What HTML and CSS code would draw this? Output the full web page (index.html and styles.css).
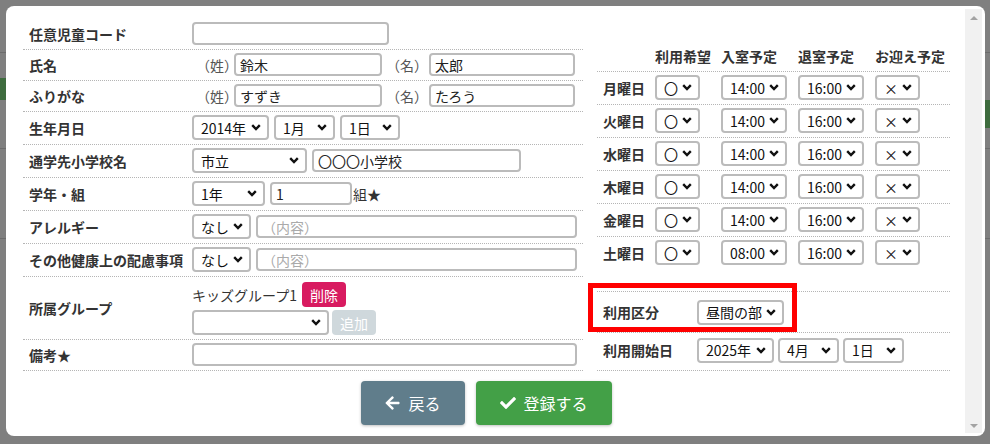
FILE: index.html
```html
<!DOCTYPE html>
<html lang="ja">
<head>
  <meta charset="UTF-8">
  <title>児童登録</title>
  <link rel="stylesheet" href="styles.css">
</head>
<body>
  <div class="backdrop">
    <div class="modal">
      <div class="modal-body">
        <div class="form-cols">

          <!-- 基本情報 -->
          <div class="form-left">
            <div class="frow">
              <div class="flabel">任意児童コード</div>
              <div class="fvalue"><input class="inp w-code" type="text"></div>
            </div>
            <div class="frow">
              <div class="flabel">氏名</div>
              <div class="fvalue name-value">
                <span class="paren">（姓）</span><input class="inp w-sei" type="text" value="鈴木">
                <span class="paren paren-mei">（名）</span><input class="inp w-mei" type="text" value="太郎">
              </div>
            </div>
            <div class="frow">
              <div class="flabel">ふりがな</div>
              <div class="fvalue name-value">
                <span class="paren">（姓）</span><input class="inp w-sei" type="text" value="すずき">
                <span class="paren paren-mei">（名）</span><input class="inp w-mei" type="text" value="たろう">
              </div>
            </div>
            <div class="frow">
              <div class="flabel">生年月日</div>
              <div class="fvalue">
                <select class="sel w-year"><option>2014年</option></select>
                <select class="sel w-month"><option>1月</option></select>
                <select class="sel w-day"><option>1日</option></select>
              </div>
            </div>
            <div class="frow">
              <div class="flabel">通学先小学校名</div>
              <div class="fvalue">
                <select class="sel w-city"><option>市立</option></select>
                <input class="inp w-school" type="text" value="〇〇〇小学校">
              </div>
            </div>
            <div class="frow">
              <div class="flabel">学年・組</div>
              <div class="fvalue">
                <select class="sel w-grade"><option>1年</option></select>
                <input class="inp w-class" type="text" value="1"><span class="suffix">組★</span>
              </div>
            </div>
            <div class="frow">
              <div class="flabel">アレルギー</div>
              <div class="fvalue">
                <select class="sel w-yn"><option>なし</option></select>
                <input class="inp w-note" type="text" placeholder="（内容）">
              </div>
            </div>
            <div class="frow">
              <div class="flabel">その他健康上の配慮事項</div>
              <div class="fvalue">
                <select class="sel w-yn"><option>なし</option></select>
                <input class="inp w-note" type="text" placeholder="（内容）">
              </div>
            </div>
            <div class="frow">
              <div class="flabel">所属グループ</div>
              <div class="fvalue group-value">
                <div class="group-line">
                  <span>キッズグループ1</span>
                  <button class="btn-sm btn-delete">削除</button>
                </div>
                <div class="group-line">
                  <select class="sel w-group"><option></option></select>
                  <button class="btn-sm btn-add">追加</button>
                </div>
              </div>
            </div>
            <div class="frow">
              <div class="flabel">備考★</div>
              <div class="fvalue"><input class="inp w-memo" type="text"></div>
            </div>
          </div>

          <!-- 利用予定 -->
          <div class="form-right">
            <div class="week">
              <div class="wrow whead">
                <div></div>
                <div>利用希望</div>
                <div>入室予定</div>
                <div>退室予定</div>
                <div>お迎え予定</div>
              </div>
              <div class="wrow">
                <div class="wday">月曜日</div>
                <div><select class="sel w-mark"><option>〇</option></select></div>
                <div><select class="sel w-time"><option>14:00</option></select></div>
                <div><select class="sel w-time"><option>16:00</option></select></div>
                <div><select class="sel w-mark"><option>×</option></select></div>
              </div>
              <div class="wrow">
                <div class="wday">火曜日</div>
                <div><select class="sel w-mark"><option>〇</option></select></div>
                <div><select class="sel w-time"><option>14:00</option></select></div>
                <div><select class="sel w-time"><option>16:00</option></select></div>
                <div><select class="sel w-mark"><option>×</option></select></div>
              </div>
              <div class="wrow">
                <div class="wday">水曜日</div>
                <div><select class="sel w-mark"><option>〇</option></select></div>
                <div><select class="sel w-time"><option>14:00</option></select></div>
                <div><select class="sel w-time"><option>16:00</option></select></div>
                <div><select class="sel w-mark"><option>×</option></select></div>
              </div>
              <div class="wrow">
                <div class="wday">木曜日</div>
                <div><select class="sel w-mark"><option>〇</option></select></div>
                <div><select class="sel w-time"><option>14:00</option></select></div>
                <div><select class="sel w-time"><option>16:00</option></select></div>
                <div><select class="sel w-mark"><option>×</option></select></div>
              </div>
              <div class="wrow">
                <div class="wday">金曜日</div>
                <div><select class="sel w-mark"><option>〇</option></select></div>
                <div><select class="sel w-time"><option>14:00</option></select></div>
                <div><select class="sel w-time"><option>16:00</option></select></div>
                <div><select class="sel w-mark"><option>×</option></select></div>
              </div>
              <div class="wrow">
                <div class="wday">土曜日</div>
                <div><select class="sel w-mark"><option>〇</option></select></div>
                <div><select class="sel w-time"><option>08:00</option></select></div>
                <div><select class="sel w-time"><option>16:00</option></select></div>
                <div><select class="sel w-mark"><option>×</option></select></div>
              </div>
            </div>

            <div class="usage">
              <div class="urow urow-kind">
                <div class="ulabel">利用区分</div>
                <div class="uvalue"><select class="sel w-kind"><option>昼間の部</option></select></div>
              </div>
              <div class="urow urow-start">
                <div class="ulabel">利用開始日</div>
                <div class="uvalue">
                  <select class="sel w-year"><option>2025年</option></select>
                  <select class="sel w-month"><option>4月</option></select>
                  <select class="sel w-day2"><option>1日</option></select>
                </div>
              </div>
              <div class="highlight"></div>
            </div>
          </div>
        </div>

        <div class="actions">
          <button class="btn btn-back">
            <svg class="ico-back" viewBox="0 0 448 512"><path fill="#fff" d="M257.5 445.1l-22.2 22.2c-9.4 9.4-24.6 9.4-33.9 0L7 273c-9.4-9.4-9.4-24.6 0-33.9L201.4 44.7c9.4-9.4 24.6-9.4 33.9 0l22.2 22.2c9.5 9.5 9.3 25-.4 34.3L136.6 216H424c13.3 0 24 10.7 24 24v32c0 13.3-10.7 24-24 24H136.6l120.5 114.8c9.8 9.3 10 24.8.4 34.3z"/></svg>
            戻る
          </button>
          <button class="btn btn-save">
            <svg class="ico-check" viewBox="0 0 512 512"><path fill="#fff" d="M173.9 439.4l-166.4-166.4c-10-10-10-26.2 0-36.2l36.2-36.2c10-10 26.2-10 36.2 0L192 312.7 432.1 72.6c10-10 26.2-10 36.2 0l36.2 36.2c10 10 10 26.2 0 36.2l-294.4 294.4c-10 10-26.2 10-36.2 0z"/></svg>
            登録する
          </button>
        </div>
      </div>

      <div class="scrollbar">
        <span class="sb-up"></span>
        <span class="sb-down"></span>
      </div>
    </div>
  </div>
</body>
</html>
```

FILE: styles.css
```css
/* General */
* {
  margin: 0;
  padding: 0;
  box-sizing: border-box;
}

body {
  width: 990px;
  height: 444px;
  overflow: hidden;
  font-family: "Noto Sans CJK JP", "Noto Sans", sans-serif;
  font-size: 14px;
  color: #333;
  background:
    linear-gradient(#3e6c3e, #3e6c3e) 0 78px / 6px 22px no-repeat,
    linear-gradient(#3e6c3e, #3e6c3e) 984px 100px / 6px 28px no-repeat,
    linear-gradient(#6c6c6c, #6c6c6c) 0 52px / 100% 1px no-repeat,
    linear-gradient(#6c6c6c, #6c6c6c) 0 148px / 100% 1px no-repeat,
    linear-gradient(#6c6c6c, #6c6c6c) 0 238px / 100% 1px no-repeat,
    #7f7f7f;
}

/* Modal */
.backdrop {
  padding: 6px;
}

.modal {
  display: flex;
  width: 979px;
  height: 430px;
  background: #fff;
  border-radius: 8px;
}

.modal-body {
  flex: 1;
  padding: 13px 15px 11px 17px;
}

.scrollbar {
  width: 17px;
  margin: 3px 3px 3px 0;
  padding: 7px 0 5px;
  background: #f1f1f1;
  display: flex;
  flex-direction: column;
  justify-content: space-between;
  align-items: center;
}

.sb-up,
.sb-down {
  width: 0;
  height: 0;
  border-left: 4px solid transparent;
  border-right: 4px solid transparent;
}

.sb-up {
  border-bottom: 4px solid #a3a3a3;
}

.sb-down {
  border-top: 4px solid #a3a3a3;
}

.form-cols {
  display: flex;
  gap: 14px;
}

/* Form controls */
.inp {
  height: 23px;
  border: 2px solid #bbb;
  border-radius: 4px;
  padding: 0 4px;
  font-family: inherit;
  font-size: 14px;
  color: #222;
  background: #fff;
  outline: none;
}

.inp::placeholder {
  color: #aaa;
}

.sel {
  height: 25px;
  border: 2px solid #bbb;
  border-radius: 4px;
  padding: 0 16px 0 7px;
  font-family: inherit;
  font-size: 14px;
  color: #111;
  appearance: none;
  -webkit-appearance: none;
  background: #fff url("data:image/svg+xml,%3Csvg xmlns='http://www.w3.org/2000/svg' width='10' height='7' viewBox='0 0 10 7'%3E%3Cpath d='M1.2 1.2L5 5l3.8-3.8' fill='none' stroke='%23111' stroke-width='2.4'/%3E%3C/svg%3E") no-repeat right 6px center / 10px 7px;
  outline: none;
}

.w-code { width: 197px; }
.w-sei { width: 148px; }
.w-mei { width: 146px; }
.w-school { width: 209px; }
.w-class { width: 82px; }
.w-note { width: 321px; }
.w-memo { width: 385px; }

.w-year { width: 77px; }
.w-month { width: 61px; }
.w-day { width: 60px; }
.w-day2 { width: 61px; }
.w-city { width: 115px; }
.w-grade { width: 73px; }
.w-yn { width: 59px; }
.w-group { width: 137px; }
.w-mark { width: 45px; }
.w-time { width: 66px; }
.w-kind { width: 87px; }

/* Left form */
.form-left {
  width: 560px;
}

.frow {
  display: flex;
  align-items: center;
  min-height: 30px;
  padding: 3px 0 4px;
  border-bottom: 1px dotted #b5b5b5;
}

.flabel {
  width: 169px;
  padding-left: 6px;
  font-weight: bold;
  color: #333;
}

.fvalue {
  display: flex;
  align-items: center;
  gap: 5px;
}

.name-value {
  gap: 0;
}

.paren {
  margin: 0 -4px 0 4px;
  color: #555;
}

.paren-mei {
  margin-left: 4px;
  margin-right: 1px;
}

.suffix {
  margin-left: -4px;
  color: #333;
}

.group-value {
  flex-direction: column;
  align-items: flex-start;
  gap: 3px;
  padding-top: 2px;
}

.group-line {
  display: flex;
  align-items: center;
  gap: 5px;
}

.group-line + .group-line {
  gap: 3px;
}

.btn-sm {
  height: 25px;
  padding: 0 8px;
  border: none;
  border-radius: 4px;
  font-family: inherit;
  font-size: 14px;
  color: #fff;
}

.btn-delete {
  background: #d81b60;
}

.btn-add {
  background: #cfd8dc;
}

/* Right form */
.form-right {
  width: 353px;
}

.wrow {
  display: grid;
  grid-template-columns: 58px 66px 77px 77px 1fr;
  align-items: center;
  padding: 3px 0 4px;
  border-bottom: 1px dotted #b5b5b5;
}

.wrow:last-child {
  border-bottom: none;
}

.whead {
  padding: 27px 0 5px;
  line-height: 20px;
  font-weight: bold;
}

.wday {
  padding-left: 6px;
  font-weight: bold;
}

.usage {
  position: relative;
  margin-top: 22px;
  border-top: 1px dotted #b5b5b5;
}

.urow {
  display: flex;
  align-items: center;
  border-bottom: 1px dotted #b5b5b5;
}

.urow-kind {
  height: 41px;
}

.urow-start {
  height: 38px;
  padding-bottom: 3px;
}

.ulabel {
  width: 100px;
  padding-left: 6px;
  font-weight: bold;
}

.uvalue {
  display: flex;
  gap: 4px;
}

/* annotation frame */
.highlight {
  position: absolute;
  left: -9px;
  top: -9px;
  width: 209px;
  height: 49px;
  border: 5px solid #f00;
}

/* Buttons */
.actions {
  display: flex;
  justify-content: center;
  gap: 11px;
  margin-top: 10px;
}

.btn {
  display: inline-flex;
  align-items: center;
  gap: 8px;
  height: 44px;
  padding: 0 24px;
  border: none;
  border-radius: 4px;
  font-family: inherit;
  font-size: 16px;
  color: #fff;
  box-shadow: 0 1px 3px rgba(0, 0, 0, 0.25);
}

.btn-back {
  background: #607d8b;
}

.btn-save {
  background: #43a047;
}

.ico-back {
  width: 15px;
  height: 16px;
}

.ico-check {
  width: 16px;
  height: 16px;
}
```
